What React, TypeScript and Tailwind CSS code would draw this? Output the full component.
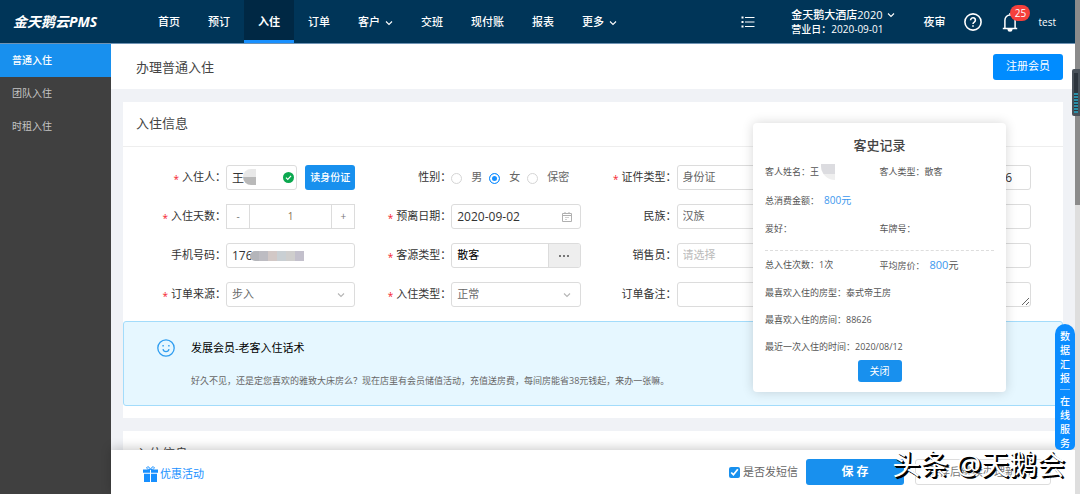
import { ReactNode } from 'react';
import clsx from 'clsx';

interface NavItem {
  label: string;
  active?: boolean;
  more?: boolean;
}

const navItems: NavItem[] = [
  { label: '首页' },
  { label: '预订' },
  { label: '入住', active: true },
  { label: '订单' },
  { label: '客户', more: true },
  { label: '交班' },
  { label: '现付账' },
  { label: '报表' },
  { label: '更多', more: true },
];

const sideItems: NavItem[] = [
  { label: '普通入住', active: true },
  { label: '团队入住' },
  { label: '时租入住' },
];

const boxClass = 'h-[25px] w-full rounded-[3px] border border-[#dcdcdc] bg-white px-[5px] text-[#333] outline-none';

function Chevron({ className }: { className?: string }) {
  return (
    <svg viewBox="0 0 8 8" className={clsx('size-2', className)} fill="none" stroke="currentColor" strokeWidth="1.1">
      <path d="M1 2.5 4 5.5 7 2.5" />
    </svg>
  );
}

function Header() {
  return (
    <header className="flex h-11 shrink-0 items-stretch border-b border-[#6f93b3] bg-[#003558] text-[11px] font-medium text-white">
      <div className="flex w-36 shrink-0 items-center pl-[13px] font-['Noto_Sans','Noto_Sans_CJK_SC',sans-serif] text-sm font-bold italic">
        金天鹅云PMS
      </div>
      <nav className="flex shrink-0">
        {navItems.map((item) => (
          <a
            key={item.label}
            href="#"
            className={clsx(
              'flex items-center gap-[5px] border-b-3 px-3.5 pt-[5px]',
              item.active ? 'border-[#1890ff] bg-[#002844] font-bold' : 'border-transparent',
            )}
          >
            {item.label}
            {item.more && <Chevron />}
          </a>
        ))}
      </nav>
      <div className="ml-auto flex shrink-0 items-center pt-px pr-[19px]">
        <button type="button" aria-label="列表">
          <svg viewBox="0 0 14 12" className="h-3 w-3.5" fill="none" stroke="currentColor" strokeWidth="1.2">
            <path d="M4 1.5h9.5M4 6h9.5M4 10.5h9.5" />
            <path d="M.5 1.5h2M.5 6h2M.5 10.5h2" strokeWidth="2" />
          </svg>
        </button>
        <div className="ml-9 leading-[14px]">
          <div className="flex items-center gap-[5px]">
            金天鹅大酒店2020
            <Chevron />
          </div>
          <div className="text-[10px]">营业日：2020-09-01</div>
        </div>
        <a href="#" className="ml-7">夜审</a>
        <button type="button" aria-label="帮助" className="ml-[19px]">
          <svg viewBox="0 0 18 18" className="size-[18px]" fill="none" stroke="currentColor" strokeWidth="1.6">
            <circle cx="9" cy="9" r="8.1" />
            <path d="M6.6 7.2a2.4 2.4 0 1 1 3.7 2c-.8.5-1.3.9-1.3 1.9" />
            <path d="M9 12.2v1.6" />
          </svg>
        </button>
        <button type="button" aria-label="消息" className="relative ml-5">
          <svg viewBox="0 0 16 20" className="h-5 w-4" fill="none" stroke="currentColor" strokeWidth="1.5">
            <path d="M.8 16.6h14.4M2.9 16.6V8.2a5.1 5.1 0 0 1 10.2 0v8.4M8 3V1" />
            <path d="M6.2 17.4a1.8 1.5 0 0 0 3.6 0z" fill="currentColor" />
          </svg>
          <span className="absolute -top-[7px] left-2 flex h-4 w-5 items-center justify-center rounded-full bg-[#f5403c] text-[10px]">25</span>
        </button>
        <span className="ml-5 text-[10px]">test</span>
      </div>
    </header>
  );
}

function Sidebar() {
  return (
    <aside className="w-[111px] shrink-0 bg-[#404040] text-[10px] text-[#c4c4c4]">
      {sideItems.map((item) => (
        <a
          key={item.label}
          href="#"
          className={clsx('flex h-[33px] items-center pl-3', item.active && 'bg-[#1890ee] font-medium text-white')}
        >
          {item.label}
        </a>
      ))}
    </aside>
  );
}

interface FieldProps {
  label?: string;
  id?: string;
  required?: boolean;
  wide?: boolean;
  children: ReactNode;
}

function Field({ label, id, required, wide, children }: FieldProps) {
  return (
    <div className={clsx('flex h-[25px] items-center', wide && 'col-span-2', !label && 'pl-24')}>
      {label && (
        <label htmlFor={id} className="flex w-24 shrink-0 items-center justify-end text-[#333]">
          {required && <span className="mr-[3px] pt-1 text-[10px] text-[#f5222d]">*</span>}
          {label}：
        </label>
      )}
      <div className="relative flex min-w-0 flex-1 items-center">{children}</div>
    </div>
  );
}

function SelectBox({ id, value, muted }: { id: string; value: string; muted?: boolean }) {
  return (
    <>
      <select id={id} className={clsx(boxClass, 'appearance-none', muted ? 'text-[#bbb]' : 'text-[#666]')}>
        <option>{value}</option>
      </select>
      <Chevron className="pointer-events-none absolute right-2.5 text-[#b5b5b5]" />
    </>
  );
}

function CheckInForm() {
  return (
    <form className="grid grid-cols-4 gap-y-3.5 pt-[18px] pr-8 pb-3.5 pl-[7px]">
      <Field label="入住人" id="guest" required>
        <div className="relative mr-2 min-w-0 flex-1">
          <input id="guest" defaultValue="王" className={clsx(boxClass, 'text-xs')} />
          <span className="absolute top-1 left-[17px] h-4 w-[13px] rounded-l-full bg-linear-to-b from-[#e8e8e8] from-50% to-[#b9b9b9] to-50%" />
          <svg viewBox="0 0 12 12" className="absolute top-[7px] right-[3px] size-[11px]" fill="none">
            <circle cx="6" cy="6" r="6" fill="#0ba84f" />
            <path d="M3.2 6.2 5.2 8.1 8.8 4.3" stroke="#fff" strokeWidth="1.3" />
          </svg>
        </div>
        <button type="button" className="h-[25px] w-[50px] rounded-[3px] bg-[#1890ee] text-[10px] font-medium text-white">
          读身份证
        </button>
      </Field>
      <Field label="性别">
        {['男', '女', '保密'].map((name) => (
          <label key={name} className="mr-[7px] flex shrink-0 items-center gap-[9px] text-[#666]">
            <input
              type="radio"
              name="gender"
              defaultChecked={name === '女'}
              className="mt-[2px] size-[11px] appearance-none rounded-full border border-[#d5d5d5] bg-white checked:border-[#1890ff] checked:bg-[#1890ff] checked:shadow-[inset_0_0_0_2px_#fff]"
            />
            {name}
          </label>
        ))}
      </Field>
      <Field label="证件类型" id="idType" required>
        <SelectBox id="idType" value="身份证" />
      </Field>
      <Field>
        <input aria-label="证件号" defaultValue="6" className={clsx(boxClass, 'pr-[18px] text-right text-xs')} />
      </Field>

      <Field label="入住天数" id="days" required>
        <div className="flex h-[25px] w-full border border-[#dcdcdc] text-[10px] text-[#777]">
          <button type="button" className="w-[22px] shrink-0">-</button>
          <input id="days" defaultValue="1" className="min-w-0 flex-1 border-x border-[#dcdcdc] text-center text-[#8a7350] outline-none" />
          <button type="button" className="w-[22px] shrink-0">+</button>
        </div>
      </Field>
      <Field label="预离日期" id="leaveDate" required>
        <input id="leaveDate" defaultValue="2020-09-02" className={clsx(boxClass, 'text-xs')} />
        <svg viewBox="0 0 10 10" className="absolute right-[9px] size-2.5" fill="none" stroke="#b0b0b0">
          <path d="M.5 1.5h9v8h-9zM.5 3.5h9M3 0v2M7 0v2" />
          <path d="M3 5.5h4M3 7.5h2" strokeWidth=".6" />
        </svg>
      </Field>
      <Field label="民族" id="nation">
        <SelectBox id="nation" value="汉族" />
      </Field>
      <Field>
        <input aria-label="地址" className={boxClass} />
      </Field>

      <Field label="手机号码" id="phone">
        <input id="phone" defaultValue="176" className={clsx(boxClass, 'text-xs')} />
        <span className="absolute left-6 flex h-2.5 w-[54px] overflow-hidden rounded-l-full">
          <i className="flex-1 bg-[#b4b5ba]" />
          <i className="flex-1 bg-[#bdbcc2]" />
          <i className="flex-1 bg-[#d2c8c6]" />
          <i className="flex-1 bg-[#c9cfd3]" />
          <i className="flex-1 bg-[#cfcecd]" />
          <i className="flex-1 bg-[#c3c0cc]" />
        </span>
      </Field>
      <Field label="客源类型" id="source" required>
        <div className="flex h-[25px] w-full overflow-hidden rounded-[3px] border border-[#dcdcdc]">
          <input id="source" defaultValue="散客" className="min-w-0 flex-1 px-[5px] text-black outline-none" />
          <button type="button" aria-label="选择客源" className="flex w-8 shrink-0 items-center justify-center gap-[2px] border-l border-[#dcdcdc] bg-[#eee]">
            <i className="size-[2px] bg-[#777]" />
            <i className="size-[2px] bg-[#777]" />
            <i className="size-[2px] bg-[#777]" />
          </button>
        </div>
      </Field>
      <Field label="销售员" id="seller">
        <SelectBox id="seller" value="请选择" muted />
      </Field>
      <Field>
        <input aria-label="会员卡" className={boxClass} />
      </Field>

      <Field label="订单来源" id="orderSource" required>
        <SelectBox id="orderSource" value="步入" />
      </Field>
      <Field label="入住类型" id="stayType" required>
        <SelectBox id="stayType" value="正常" />
      </Field>
      <Field label="订单备注" id="remark" wide>
        <textarea id="remark" rows={1} className={boxClass} />
      </Field>
    </form>
  );
}

function MemberTip() {
  return (
    <div className="flex h-[85px] rounded-[3px] border border-[#a3dcfb] bg-[#e6f7ff] pt-[17px] pl-[33px]">
      <svg viewBox="0 0 18 18" className="size-[18px] shrink-0" fill="none" stroke="#2f9df0" strokeWidth="1.3">
        <circle cx="9" cy="9" r="8.2" />
        <path d="M6 10.2c.6 3.2 5.4 3.2 6 0" />
        <path d="M5.4 6.8h1.4M11.2 6.8h1.4" strokeWidth="1.5" />
      </svg>
      <div className="ml-4">
        <h3 className="text-[11px] leading-[18px] text-black">发展会员-老客入住话术</h3>
        <p className="mt-4 text-[9px] leading-4 text-[#666]">
          好久不见，还是定您喜欢的雅致大床房么？现在店里有会员储值活动，充值送房费，每间房能省38元钱起，来办一张嘛。
        </p>
      </div>
    </div>
  );
}

function GuestHistory() {
  return (
    <div
      role="dialog"
      aria-label="客史记录"
      className="absolute top-[21px] right-[57px] w-[253px] rounded bg-white px-3 pt-3 pb-2.5 text-[9px] text-[#555] shadow-[0_0_12px_rgba(0,0,0,0.16)]"
    >
      <h2 className="mb-[3px] text-center text-[13px] leading-5 font-medium text-[#444]">客史记录</h2>
      <div className="grid grid-cols-2 leading-7">
        <div className="relative">
          客人姓名：王
          <span className="absolute top-1.5 left-[56px] h-4 w-[14px] rounded-bl-full bg-linear-to-b from-[#dcdce0] from-60% to-[#efefef] to-60%" />
        </div>
        <div>客人类型：散客</div>
        <div className="col-span-2">
          总消费金额：<span className="ml-[5px] text-[10px] text-[#3c97ee]">800元</span>
        </div>
        <div>爱好：</div>
        <div>车牌号：</div>
      </div>
      <div className="mt-[7px] grid grid-cols-2 border-t border-dashed border-[#ddd] leading-[27px]">
        <div>总入住次数：1次</div>
        <div>
          平均房价：<span className="ml-[5px] text-[11px] text-[#3c97ee]">800</span>
          <span className="text-[10px]">元</span>
        </div>
        <div className="col-span-2">最喜欢入住的房型：泰式帝王房</div>
        <div className="col-span-2">最喜欢入住的房间：88626</div>
        <div className="col-span-2">最近一次入住的时间：2020/08/12</div>
      </div>
      <button type="button" className="mx-auto block h-[22px] w-11 rounded-[3px] bg-[#1890ee] text-[10px] text-white">
        关闭
      </button>
    </div>
  );
}

function Footer() {
  return (
    <footer className="relative flex h-11 shrink-0 items-center bg-white pr-6 pl-8 text-[11px] shadow-[0_-2px_10px_rgba(0,0,0,0.2)]">
      <a href="#" className="flex items-center gap-[2px] pt-1 text-[#1890ff]">
        <svg viewBox="0 0 15 16" className="h-4 w-[15px]" fill="currentColor">
          <path d="M0 3.5h7v3.2H0zM8 3.5h7v3.2H8zM1 7.7h6V16H1zM8 7.7h6V16H8z" />
          <path
            d="M7.300 3.500C5 3.500 3.300 2.800 3.800 1.500 4.500.1 6.800.9 7.300 3.500zM7.700 3.500C10 3.500 11.700 2.800 11.200 1.500 10.500.1 8.200.9 7.700 3.500z"
            fill="none"
            stroke="currentColor"
          />
        </svg>
        优惠活动
      </a>
      <label className="ml-auto flex items-center gap-[3px] text-[#666]">
        <input type="checkbox" defaultChecked className="size-[11px] accent-[#1890ee]" />
        是否发短信
      </label>
      <button type="button" className="ml-2 h-[26px] w-[98px] rounded-[3px] bg-[#1890ee] text-xs font-bold text-white">
        保 存
      </button>
      <button type="button" className="ml-[11px] h-[26px] w-[136px] rounded-[3px] border border-[#ddd] bg-white text-[#777]">
        保存后继续办理新入住
      </button>
      <span className="pointer-events-none absolute right-2.5 bottom-4 text-[28px] leading-7 whitespace-nowrap text-white [text-shadow:1px_1px_0_#000,2px_2px_0_#000]">
        头条 @天鹅会
      </span>
    </footer>
  );
}

export default function App() {
  return (
    <div className="flex h-screen overflow-hidden bg-[#f0f2f6] font-['Open_Sans','Noto_Sans_CJK_SC',sans-serif] text-[11px]">
      <div className="relative flex min-w-0 flex-1 flex-col">
        <Header />
        <div className="flex min-h-0 flex-1">
          <Sidebar />
          <div className="flex min-w-0 flex-1 flex-col">
            <main className="min-h-0 flex-1 overflow-hidden">
              <div className="flex h-[45px] items-center justify-between bg-white pr-3 pl-[25px]">
                <h1 className="pt-[2px] text-[13px] text-[#444]">办理普通入住</h1>
                <button type="button" className="h-[26px] w-[70px] rounded-[3px] bg-[#008cff] text-white">
                  注册会员
                </button>
              </div>
              <div className="px-3 py-[13px]">
                <section className="relative bg-white pb-3">
                  <h2 className="flex h-[45px] items-center border-b border-[#eee] pl-[13px] text-[13px] text-[#444]">入住信息</h2>
                  <CheckInForm />
                  <MemberTip />
                  <GuestHistory />
                </section>
                <section className="mt-[13px] bg-white">
                  <h2 className="flex h-[45px] items-center pl-[13px] text-[13px] text-[#444]">入住信息</h2>
                </section>
              </div>
            </main>
            <Footer />
          </div>
        </div>
        <div className="absolute right-0 bottom-11 flex h-[126px] w-5 flex-col items-center rounded-t-[10px] rounded-b-[5px] bg-[#0a8cff] pt-[5px] text-[10px] font-medium text-white">
          <a href="#" className="w-2.5 leading-[14px] break-all">数据汇报</a>
          <hr className="my-1 w-2.5 border-[#7cc0ff]" />
          <a href="#" className="w-2.5 leading-[14px] break-all">在线服务</a>
        </div>
      </div>
      <div className="relative w-[5px] shrink-0 bg-[#dedede]">
        <div className="h-[205px] bg-[#8b8b8b]" />
        <div className="absolute top-[69px] right-0 flex h-[47px] w-2 flex-col items-center justify-end rounded-l-[2px] bg-[#4a525a] pb-[3px]">
          <div className="h-10 w-1 bg-[#2d353d] bg-[repeating-linear-gradient(#2a8fa8_0_2px,#2d353d_2px_3px)] bg-[length:100%_20px] bg-bottom bg-no-repeat" />
        </div>
      </div>
    </div>
  );
}
